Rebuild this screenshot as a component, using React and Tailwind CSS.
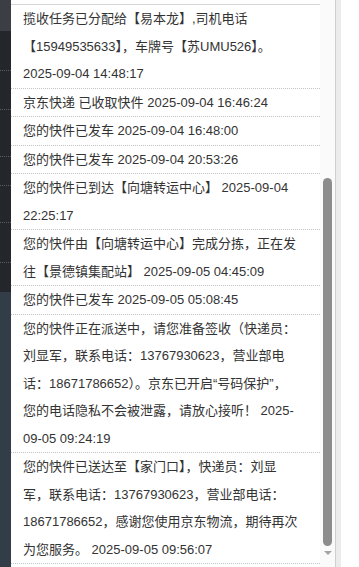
const rows = [
  '揽收任务已分配给【易本龙】,司机电话【15949535633】，车牌号【苏UMU526】。 2025-09-04 14:48:17',
  '京东快递 已收取快件 2025-09-04 16:46:24',
  '您的快件已发车 2025-09-04 16:48:00',
  '您的快件已发车 2025-09-04 20:53:26',
  '您的快件已到达【向塘转运中心】 2025-09-04 22:25:17',
  '您的快件由【向塘转运中心】完成分拣，正在发往【景德镇集配站】 2025-09-05 04:45:09',
  '您的快件已发车 2025-09-05 05:08:45',
  '您的快件正在派送中，请您准备签收（快递员：刘显军，联系电话：13767930623，营业部电话：18671786652）。京东已开启“号码保护”，您的电话隐私不会被泄露，请放心接听！ 2025-09-05 09:24:19',
  '您的快件已送达至【家门口】，快递员：刘显军，联系电话：13767930623，营业部电话：18671786652，感谢您使用京东物流，期待再次为您服务。 2025-09-05 09:56:07',
];

function SideStrip() {
  return (
    <div className="flex w-[11px] shrink-0 flex-col">
      <div className="h-[31px] bg-[#3b3f45]" />
      <div className="h-[40px] bg-[#23272c] border-b border-dotted border-[#5a5e64]" />
      <div className="h-[39px] bg-[#23272c] border-b border-dotted border-[#5a5e64]" />
      <div className="h-[47px] bg-[#23272c] border-b border-dotted border-[#5a5e64]" />
      <div className="h-[29px] bg-[#23272c] border-b border-dotted border-[#5a5e64]" />
      <div className="h-[37px] bg-[#23272c] border-b border-dotted border-[#5a5e64]" />
      <div className="h-[40px] bg-[#23272c] border-b border-dotted border-[#5a5e64]" />
      <div className="h-[29px] bg-[#23272c]" />
      <div className="flex-1 bg-[#333d47]" />
    </div>
  );
}

function Scrollbar() {
  return (
    <div className="flex w-[15px] shrink-0 flex-col items-center bg-[#fafafa]">
      <div className="h-[178px]" />
      <div className="h-[368px] w-[9px] rounded-full bg-[#8d8d8d]" />
      <div className="mt-[5px] h-0 w-0 border-l-[4px] border-r-[4px] border-t-[4px] border-l-transparent border-r-transparent border-t-[#a3a3a3]" />
    </div>
  );
}

export default function App() {
  return (
    <div
      className="flex h-[567px] w-[359px] overflow-hidden bg-white"
      style={{ fontFamily: '"Liberation Sans", "Noto Sans CJK SC", sans-serif' }}
    >
      <SideStrip />
      <div className="w-[309px] shrink-0 overflow-hidden pt-[4px]">
        <div className="border-t border-[#d6d6d6]">
          {rows.map((text, i) => (
            <div
              key={i}
              className="border-b border-dotted border-[#c4c4c4] pl-[12px] pr-[21px] text-[13px] leading-[27.5px] text-[#333]"
            >
              {text}
            </div>
          ))}
        </div>
      </div>
      <Scrollbar />
      <div className="w-px shrink-0 bg-[#cfcfcf]" />
      <div className="w-[5px] shrink-0 bg-[#ececec]" />
      <div className="flex-1 bg-white" />
    </div>
  );
}
